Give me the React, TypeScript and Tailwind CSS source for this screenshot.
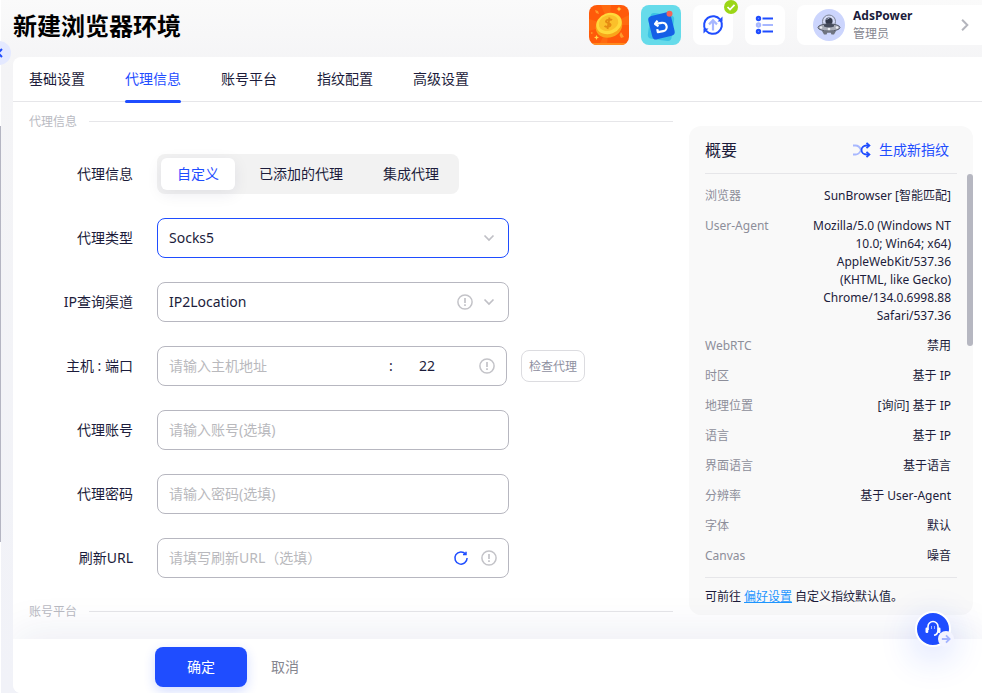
import React, { useState } from "react";

const tabs = ["基础设置", "代理信息", "账号平台", "指纹配置", "高级设置"];
const sources = ["自定义", "已添加的代理", "集成代理"];

const summary = [
  ["浏览器", "SunBrowser [智能匹配]"],
  [
    "User-Agent",
    "Mozilla/5.0 (Windows NT 10.0; Win64; x64) AppleWebKit/537.36 (KHTML, like Gecko) Chrome/134.0.6998.88 Safari/537.36",
  ],
  ["WebRTC", "禁用"],
  ["时区", "基于 IP"],
  ["地理位置", "[询问] 基于 IP"],
  ["语言", "基于 IP"],
  ["界面语言", "基于语言"],
  ["分辨率", "基于 User-Agent"],
  ["字体", "默认"],
  ["Canvas", "噪音"],
];

function CoinIcon() {
  return (
    <svg viewBox="0 0 40 40" className="size-10 rounded-lg" aria-hidden="true">
      <rect width="40" height="40" fill="#ff5a0a" />
      <path d="M0 14v12L20 20zM12 0h10L20 20zM40 10v10L20 20zM10 40h8l2-20z" fill="#ff6a10" />
      <path d="M0 38h40v2H0z" fill="#ff8a1f" />
      <ellipse cx="20" cy="21.500" rx="13.500" ry="11" fill="#f9a51a" transform="rotate(-20 20 21.500)" />
      <ellipse cx="20" cy="18.500" rx="13" ry="10.500" fill="#ffd93b" transform="rotate(-20 20 18.500)" />
      <ellipse cx="19.500" cy="18" rx="10" ry="7.800" fill="#fbc02a" transform="rotate(-20 19.500 18)" />
      <path d="M23 15.200c-1.200-1.200-5.600-.8-6 1.100-.4 2 5 1.600 4.600 3.800-.4 2-4.600 2.200-6 .8M20.500 12.500l-2 11.500" fill="none" stroke="#e58a12" strokeWidth="1.900" />
      <path d="M30 1.500l.8 1.700 1.700.8-1.700.8-.8 1.700-.8-1.700-1.700-.8 1.700-.8zM7.500 30l.8 1.700 1.700.8-1.700.8-.8 1.700-.8-1.700-1.700-.8 1.700-.8z" fill="#ffd84a" />
      <path d="M6 5l3 1 1 3-3-1zM2 27l2.500 1L2 29zM32 27l3 5-3 1-1.500-3z" fill="#ff9a2a" />
    </svg>
  );
}

function ReplyIcon() {
  return (
    <svg viewBox="0 0 40 40" className="size-10 rounded-lg" aria-hidden="true">
      <rect width="40" height="40" fill="#66dbea" />
      <rect x="8" y="9" width="24" height="26" rx="4" fill="#3cc3e4" transform="rotate(8 20 22)" />
      <rect x="9" y="9" width="23" height="24" rx="4" fill="#1560e6" transform="rotate(-14 20 21)" />
      <g transform="rotate(-10 20 21)" fill="none" stroke="#fff" strokeWidth="2.200" strokeLinejoin="round">
        <path d="M14.800 18h6.500a4.200 4.200 0 0 1 0 8.400h-5.500v-3" />
        <path d="M17.500 15l-3 3 3 2.800" />
      </g>
      <circle cx="28.500" cy="8.800" r="3" fill="#f4645a" />
    </svg>
  );
}

function SyncIcon() {
  return (
    <svg viewBox="0 0 24 24" className="size-6" fill="none" aria-hidden="true">
      <g stroke="#1f4dff" strokeWidth="2">
        <path d="M4.500 17A9 9 0 0 1 19 6.400" />
        <path d="M19.500 7A9 9 0 0 1 5 17.600" />
      </g>
      <path d="M21.500 3.500v5h-5zM2.500 20.500v-5h5z" fill="#1f4dff" />
      <path d="M12 17.500V8M8 11.400l4-4 4 4" stroke="#a7b7ff" strokeWidth="2.200" />
    </svg>
  );
}

function ListIcon() {
  return (
    <svg viewBox="0 0 24 24" className="size-6" fill="none" strokeWidth="2" aria-hidden="true">
      <g stroke="#1f4dff">
        <circle cx="5.500" cy="5.500" r="1.700" fill="#6d88ff" />
        <path d="M9.500 5.500H20" />
        <circle cx="5.500" cy="18.500" r="1.700" fill="#6d88ff" />
        <path d="M9.500 18.500H20" />
      </g>
      <g stroke="#a7b7ff">
        <circle cx="5.500" cy="12" r="1.700" fill="#c3ceff" />
        <path d="M9.500 12H20" />
      </g>
    </svg>
  );
}

function Avatar() {
  return (
    <svg viewBox="0 0 32 32" className="size-8" aria-hidden="true">
      <circle cx="16" cy="16" r="16" fill="#ccd5fd" />
      <circle cx="16" cy="12.500" r="6.500" fill="#d5dbf5" stroke="#7d8496" />
      <circle cx="16" cy="12" r="3.600" fill="#33394a" />
      <path d="M13.500 10.500l3-1.500" stroke="#a4acc2" />
      <ellipse cx="16" cy="18.500" rx="11" ry="3.600" fill="#a9adb8" stroke="#535866" />
      <path d="M11 15.500c3-1 7-1 10 0v2c-3 1.200-7 1.200-10 0z" fill="#464c5c" />
      <circle cx="8" cy="18.500" r="1.300" fill="#eceef3" />
      <circle cx="24" cy="18.500" r="1.300" fill="#eceef3" />
      <circle cx="16" cy="20" r="1.300" fill="#eceef3" />
      <path d="M9 22l2 3.500h2.500l.8-1.800h3.400l.8 1.800H21l2-3.500z" fill="#6e7380" />
    </svg>
  );
}

function Chevron({ className }: { className: string }) {
  return (
    <svg viewBox="0 0 12 12" className={className} fill="none" stroke="currentColor" strokeWidth="1.700" aria-hidden="true">
      <path d="M1.500 3.500L6 8l4.500-4.500" />
    </svg>
  );
}

function Info() {
  return (
    <svg viewBox="0 0 16 16" className="size-4 shrink-0 text-[#c3c3c8]" fill="none" stroke="currentColor" strokeWidth="1.500" aria-hidden="true">
      <circle cx="8" cy="8" r="7.100" />
      <path d="M8 4v5M8 10.300v1.700" strokeWidth="1.700" />
    </svg>
  );
}

function Refresh() {
  return (
    <svg viewBox="0 0 16 16" className="size-4" fill="none" stroke="#1f4dff" strokeWidth="1.500" aria-hidden="true">
      <path d="M12.600 4A6.100 6.100 0 1 0 14.100 8" />
      <path d="M10 4.600h3V1.800" />
    </svg>
  );
}

function Shuffle() {
  return (
    <svg viewBox="0 0 18 16" className="h-4 w-[18px]" fill="none" strokeWidth="1.800" aria-hidden="true">
      <path d="M0 3.500h2.500C5 3.500 7 5.500 8 8M0 12.500h2.500C5 12.500 7 10.500 8 8" stroke="#a7b7ff" />
      <path d="M16 3.500h-2.500c-3 0-5 2-5 4.500s2 4.500 5 4.500H16" stroke="#1f4dff" />
      <path d="M13.500.8l2.900 2.700-2.900 2.700M13.500 9.800l2.900 2.700-2.900 2.700" stroke="#1f4dff" />
    </svg>
  );
}

function SectionTitle({ children }: { children: React.ReactNode }) {
  return (
    <div className="flex h-5 items-center gap-3">
      <h2 className="pt-0.5 text-xs text-[#b9bac2]">{children}</h2>
      <span className="h-px flex-1 bg-[#e6e6e9]" />
    </div>
  );
}

function Row({ label, id, children }: { label: string; id?: string; children: React.ReactNode }) {
  return (
    <div className="flex h-10 items-center gap-6">
      {id ? (
        <label htmlFor={id} className="w-[104px] shrink-0 text-right">{label}</label>
      ) : (
        <span className="w-[104px] shrink-0 text-right">{label}</span>
      )}
      {children}
    </div>
  );
}

const box = "flex h-10 items-center rounded-lg border bg-white px-[11px]";
const field = "h-full min-w-0 flex-1 appearance-none bg-transparent outline-none placeholder:text-[#b9b9bd]";
const textField = "h-full min-w-0 flex-1 bg-transparent pb-0.5 outline-none placeholder:text-[#b9b9bd]";

export default function App() {
  const [tab, setTab] = useState("代理信息");
  const [source, setSource] = useState("自定义");

  return (
    <div className="relative flex h-screen flex-col overflow-hidden bg-linear-to-b from-[#fafafa] via-[#f4f4f6] via-10% to-[#f1f2f8] pl-[13px] font-['Noto_Sans','Noto_Sans_CJK_SC',sans-serif] text-sm text-[#1c1c3b]">
      <span className="absolute top-0 left-0 h-full w-px bg-white" />
      <span className="absolute top-[126px] left-0 h-[416px] w-px bg-[#b4b5c2]" />
      <button aria-label="收起" className="absolute top-[41px] -left-[13px] flex size-6 items-center justify-end rounded-full bg-[#e4e9ff] pr-2 text-[#1f4dff]">
        <svg viewBox="0 0 8 10" className="h-2.5 w-2" fill="none" stroke="currentColor" strokeWidth="2" aria-hidden="true">
          <path d="M7 1L3 5l4 4" />
        </svg>
      </button>

      <header className="flex h-[57px] shrink-0 items-start gap-3 pt-[5px]">
        <h1 className="flex h-10 flex-1 items-center pt-0.5 text-2xl font-bold text-black">新建浏览器环境</h1>
        <button aria-label="奖励"><CoinIcon /></button>
        <button aria-label="返回"><ReplyIcon /></button>
        <button aria-label="更新" className="relative flex size-10 items-center justify-center rounded-lg bg-white">
          <SyncIcon />
          <svg viewBox="0 0 14 14" className="absolute -top-[5px] -right-[5px] size-[14px]" aria-hidden="true">
            <circle cx="7" cy="7" r="7" fill="#9bd617" />
            <path d="M3.500 7l2.500 2.500 4.500-4.700" fill="none" stroke="#fff" strokeWidth="1.700" />
          </svg>
        </button>
        <button aria-label="列表" className="flex size-10 items-center justify-center rounded-lg bg-white">
          <ListIcon />
        </button>
        <button className="flex h-10 w-[185px] items-center gap-2 rounded-l-lg bg-white pr-2.5 pl-4 text-left">
          <Avatar />
          <span className="flex-1">
            <span className="block text-xs leading-4 font-bold">AdsPower</span>
            <span className="block pt-0.5 text-xs leading-4 text-[#85868f]">管理员</span>
          </span>
          <Chevron className="size-3.5 -rotate-90 text-[#b4b5bd]" />
        </button>
      </header>

      <main className="flex min-h-0 flex-1 flex-col overflow-hidden rounded-l-lg bg-white">
        <nav className="flex h-[46px] shrink-0 gap-10 px-4">
          {tabs.map((t) => (
            <button
              key={t}
              onClick={() => setTab(t)}
              className={
                t === tab
                  ? "relative z-10 h-[46px] pb-0.5 text-[#1f4dff] after:absolute after:inset-x-0 after:bottom-0 after:h-[3px] after:rounded-full after:bg-[#1f4dff]"
                  : "h-[46px] pb-0.5"
              }
            >
              {t}
            </button>
          ))}
        </nav>
        <div className="-mt-0.5 h-px shrink-0 bg-[#e6e6e9]" />

        <div className="flex min-h-0 flex-1 items-start gap-4 overflow-hidden pr-[9px] pl-4">
          <form className="min-w-0 flex-1 pt-[9px]" onSubmit={(e) => e.preventDefault()}>
            <SectionTitle>代理信息</SectionTitle>
            <div className="flex flex-col gap-6 pt-[23px] pb-[23px]">
              <Row label="代理信息">
                <div className="flex h-10 items-center gap-2 rounded-lg bg-[#f2f2f2] p-1">
                  {sources.map((s) => (
                    <button
                      key={s}
                      type="button"
                      onClick={() => setSource(s)}
                      className={
                        s === source
                          ? "h-8 rounded-md bg-white px-4 text-[#1f4dff] shadow-[0_4px_16px_rgba(28,28,80,0.08)]"
                          : "h-8 rounded-md px-4"
                      }
                    >
                      {s}
                    </button>
                  ))}
                </div>
              </Row>
              <Row label="代理类型" id="type">
                <div className={`${box} w-[352px] border-[#1f4dff]`}>
                  <select id="type" className={field} defaultValue="Socks5">
                    <option>Socks5</option>
                  </select>
                  <Chevron className="mr-0.5 size-3 text-[#c0c0c6]" />
                </div>
              </Row>
              <Row label="IP查询渠道" id="channel">
                <div className={`${box} w-[352px] border-[#b7b7c0]`}>
                  <select id="channel" className={field} defaultValue="IP2Location">
                    <option>IP2Location</option>
                  </select>
                  <Info />
                  <Chevron className="mr-0.5 ml-[10px] size-3 text-[#c0c0c6]" />
                </div>
              </Row>
              <Row label="主机 : 端口" id="host">
                <div className="flex items-center gap-[14px]">
                  <div className={`${box} w-[350px] border-[#b7b7c0]`}>
                    <input id="host" className={textField} placeholder="请输入主机地址" />
                    <span className="w-[30px]">:</span>
                    <input aria-label="端口" className="h-full w-[60px] bg-transparent pb-0.5 outline-none" defaultValue="22" />
                    <Info />
                  </div>
                  <button type="button" className="h-8 w-16 rounded-lg border border-[#dcdce0] pt-0.5 text-xs text-[#8e8f9f]">检查代理</button>
                </div>
              </Row>
              <Row label="代理账号" id="account">
                <div className={`${box} w-[352px] border-[#b7b7c0]`}>
                  <input id="account" className={textField} placeholder="请输入账号(选填)" />
                </div>
              </Row>
              <Row label="代理密码" id="password">
                <div className={`${box} w-[352px] border-[#b7b7c0]`}>
                  <input id="password" type="password" className={textField} placeholder="请输入密码(选填)" />
                </div>
              </Row>
              <Row label="刷新URL" id="refresh">
                <div className={`${box} w-[352px] gap-3 border-[#b7b7c0]`}>
                  <input id="refresh" className={textField} placeholder="请填写刷新URL（选填）" />
                  <button type="button" aria-label="刷新"><Refresh /></button>
                  <Info />
                </div>
              </Row>
            </div>
            <SectionTitle>账号平台</SectionTitle>
          </form>

          <aside className="relative mt-6 w-[284px] shrink-0 rounded-xl bg-[#f9f9f9] px-4">
            <div className="flex h-12 items-center justify-between border-b border-[#e6e6e9] pr-2">
              <h2 className="text-base">概要</h2>
              <button className="flex items-center gap-2 text-[#1f4dff]">
                <Shuffle />
                生成新指纹
              </button>
            </div>
            <dl className="pt-[7px] pb-1.5 text-xs leading-[18px]">
              {summary.map(([name, value]) => (
                <div key={name} className="flex justify-between gap-4 py-1.5 pr-[6px]">
                  <dt className="shrink-0 text-[#8d8e9a]">{name}</dt>
                  <dd className="w-[150px] flex-none text-right">{value}</dd>
                </div>
              ))}
            </dl>
            <p className="flex h-[38px] items-center gap-[3px] border-t border-[#e6e6e9] text-xs">
              可前往
              <a href="#preferences" className="text-[#1e96ff] underline">偏好设置</a>
              自定义指纹默认值。
            </p>
            <span className="absolute top-12 right-0 h-[172px] w-1.5 rounded-full bg-[#b6b7c1]" />
          </aside>
        </div>

        <footer className="relative flex h-[54px] shrink-0 items-center gap-6 bg-white pt-0.5 pl-[142px] shadow-[0_-8px_40px_rgba(30,40,110,0.08)]">
          <button className="h-10 w-[92px] rounded-lg bg-[#1f4dff] text-white shadow-[0_4px_12px_rgba(31,77,255,0.2)]">确定</button>
          <button className="text-[#85868f]">取消</button>
        </footer>
      </main>

      <button aria-label="在线客服" className="absolute right-[31px] bottom-[46px] size-9 rounded-full border-2 border-white bg-[#1f4dff] shadow-[0_10px_36px_rgba(31,77,255,0.22)]">
        <svg viewBox="0 0 32 32" className="size-8" fill="none" aria-hidden="true">
          <path d="M11 17v-3.500a5 5 0 0 1 10 0V17c0 3-1 4.800-4 5.300" stroke="#fff" strokeWidth="1.600" />
          <rect x="8.500" y="14.500" width="2.800" height="5.500" rx="1.200" fill="#fff" />
          <rect x="20.700" y="14.500" width="2.800" height="5.500" rx="1.200" fill="#fff" />
          <path d="M14.500 13v3M17.500 13v3" stroke="#9db0ff" />
        </svg>
        <span className="absolute -right-[5px] -bottom-0.5 flex size-4 items-center justify-center rounded-full bg-[#f3f4ff]">
          <svg viewBox="0 0 12 12" className="size-2.5" fill="none" stroke="#a3b3ff" strokeWidth="2.200" aria-hidden="true">
            <path d="M1 6h9M6 1.700L10.300 6 6 10.300" />
          </svg>
        </span>
      </button>
    </div>
  );
}
